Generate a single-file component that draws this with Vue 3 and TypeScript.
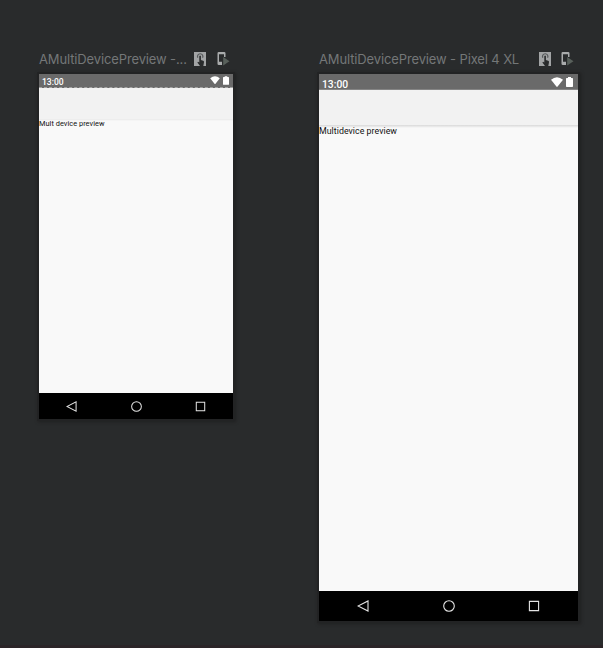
<script setup lang="ts">
interface Device {
  id: string
  title: string
  text: string
}

const devices: Device[] = [
  { id: 'small', title: 'AMultiDevicePreview -...', text: 'Mult device preview' },
  { id: 'large', title: 'AMultiDevicePreview - Pixel 4 XL', text: 'Multidevice preview' },
]
</script>

<template>
  <main class="canvas">
    <section v-for="device in devices" :key="device.id" class="preview" :class="device.id">
      <header class="heading">
        <span class="title">{{ device.title }}</span>
        <span class="actions">
          <svg class="touch" viewBox="0 0 12 14">
            <path d="M0 0h12v14H0z" fill="#a2a4a5" />
            <path d="M3.8 5.7a2.7 2.7 0 1 1 4.8 0" fill="none" stroke="#55585a" stroke-width="1.2" />
            <path d="M5.3 4q.8-.9 1.6 0v4l2.3.8q1 .4.8 1.4L9.3 14H6L3.4 10.4l.7-.7 1.2.8z" fill="#292b2c" />
          </svg>
          <svg class="run" viewBox="0 0 13 14">
            <path d="M1.8 0h5.4q1.3 0 1.3 1.3V5H7V2.2H2v7.6h3V13H1.8Q.5 13 .5 11.7V1.3Q.5 0 1.8 0z" fill="#a9abac" />
            <path d="M6.2 5.1 12.5 9.2 6.2 13.5z" fill="#58605b" />
          </svg>
        </span>
      </header>
      <div class="phone">
        <div class="status">
          <span class="clock">13:00</span>
          <svg class="wifi" viewBox="0 0 12 10">
            <path d="M0 2.8Q6-2.4 12 2.8L6.6 9.6q-.6.6-1.2 0z" fill="#fff" />
          </svg>
          <svg class="battery" viewBox="0 0 7 10">
            <path d="M2 0h3v1h1.3q.7 0 .7.7v7.6q0 .7-.7.7H.7Q0 10 0 9.3V1.7Q0 1 .7 1H2z" fill="#fff" />
          </svg>
        </div>
        <div class="appbar"></div>
        <div class="content">{{ device.text }}</div>
        <nav class="navigation">
          <svg viewBox="0 0 12 12"><path d="M11 .9v10.2L1 6z" /></svg>
          <svg viewBox="0 0 12 12"><circle cx="6" cy="6" r="5.3" /></svg>
          <svg viewBox="0 0 12 12"><path d="M1.4 1.4h9.2v9.2H1.4z" /></svg>
        </nav>
      </div>
    </section>
  </main>
</template>

<style>
body {
  background: #292b2c;
}
</style>

<style scoped>
.canvas {
  box-sizing: border-box;
  display: flex;
  align-items: flex-start;
  gap: 86px;
  width: 603px;
  height: 648px;
  padding: 48px 25px 0 39px;
  overflow: hidden;
  background: #292b2c;
  border-bottom: 3px solid #2b2528;
}
svg {
  display: block;
  flex: none;
}
.small {
  width: 194px;
}
.large {
  width: 259px;
}
.heading {
  display: flex;
  align-items: center;
  justify-content: space-between;
  height: 22px;
  margin-bottom: 4px;
  color: #747778;
  font: 13px/22px Inter, sans-serif;
  white-space: nowrap;
}
.title {
  letter-spacing: -0.13px;
}
.actions {
  display: flex;
  gap: 11px;
  padding-right: 3px;
}
.touch {
  width: 12px;
  height: 14px;
}
.run {
  width: 13px;
  height: 14px;
}
.large .actions {
  gap: 10px;
  padding-right: 4px;
}
.phone {
  display: flex;
  flex-direction: column;
  background: #f9f9f9;
  box-shadow: 0 0 0 2px #222324, 1px 1px 3px 2px #1f2021;
}
.small .phone {
  height: 345px;
}
.large .phone {
  height: 547px;
}
.status {
  box-sizing: border-box;
  display: flex;
  flex: none;
  color: #fff;
  background: #6a6a6a;
}
.small .status {
  height: 14px;
  padding: 2px 4px 0 3px;
  border-bottom: 1px dashed #a5a5a5;
}
.large .status {
  height: 16px;
  padding: 3px 5px 0 3px;
  border-bottom: 1px solid #858585;
}
.clock {
  margin-right: auto;
  font-family: Roboto, sans-serif;
  font-weight: 500;
}
.small .clock {
  font-size: 8.5px;
  line-height: 13px;
}
.large .clock {
  font-size: 10.3px;
  line-height: 15px;
}
.wifi {
  width: 10px;
  height: 8px;
  margin-right: 3px;
}
.battery {
  width: 6px;
  height: 9px;
}
.large .wifi {
  width: 12px;
  height: 10px;
}
.large .battery {
  width: 7px;
  height: 10px;
}
.appbar {
  flex: none;
  background: #f2f2f2;
}
.small .appbar {
  height: 31px;
}
.large .appbar {
  height: 35px;
}
.content {
  flex: 1;
  color: #111;
  font-family: Roboto, sans-serif;
  white-space: nowrap;
}
.small .content {
  background: linear-gradient(#e9e9e9, #f9f9f9 2px);
  font-size: 7.4px;
  line-height: 9px;
  letter-spacing: 0.03px;
}
.large .content {
  background: linear-gradient(#d9d9d9, #f9f9f9 3px);
  font-size: 8.8px;
  line-height: 13px;
  letter-spacing: 0.04px;
}
.navigation {
  display: flex;
  align-items: center;
  justify-content: space-between;
  background: #000;
}
.navigation svg {
  width: 12px;
  height: 12px;
  fill: none;
  stroke: #e5e5e5;
  stroke-width: 1.1;
}
.small .navigation {
  height: 26px;
  padding: 0 27px;
}
.small .navigation svg {
  width: 11px;
  height: 11px;
}
.large .navigation {
  height: 30px;
  padding: 0 38px;
}
</style>
